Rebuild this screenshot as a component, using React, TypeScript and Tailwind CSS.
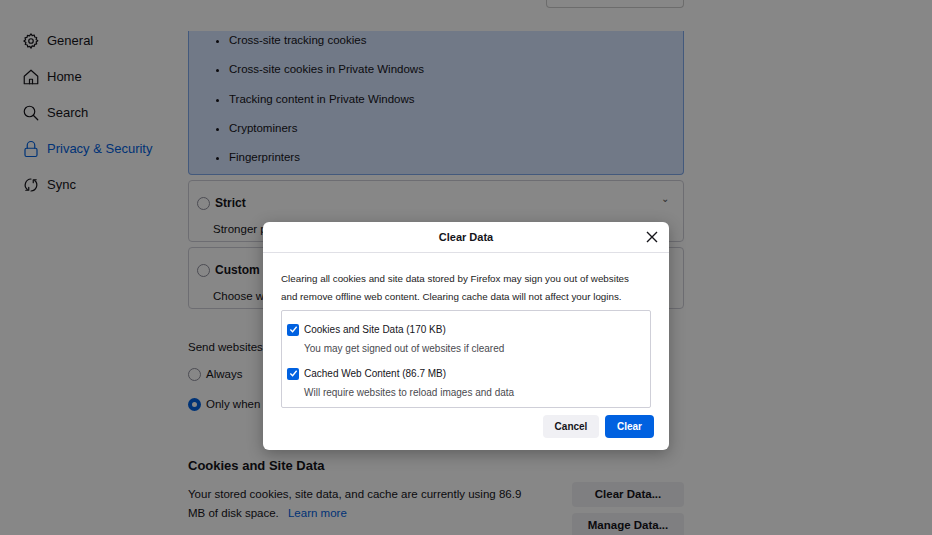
import React from "react";

const F = { fontFamily: "'Liberation Sans', Arial, sans-serif" };

function Nav({ icon, label, active }: { icon: React.ReactNode; label: string; active?: boolean }) {
  return (
    <div className={`flex items-center gap-[7px] h-[36px] ${active ? "text-[#0061e0]" : "text-[#15141a]"}`}>
      <span className="w-[18px] h-[18px] flex items-center justify-center">{icon}</span>
      <span className="text-[13px]">{label}</span>
    </div>
  );
}

const sv = { width: 18, height: 18, viewBox: "0 0 24 24", fill: "none", stroke: "currentColor", strokeWidth: 1.6, strokeLinecap: "round" as const, strokeLinejoin: "round" as const };

export default function App() {
  return (
    <div className="relative w-[932px] h-[535px] overflow-hidden bg-white" style={F}>
      <div className="flex">
        <div className="w-[188px] pl-[22px] pt-[23px] shrink-0">
          <Nav label="General" icon={<svg {...sv}><circle cx="12" cy="12" r="3" /><path d="M12 2.5l1.6 2.3 2.7-.8.6 2.7 2.7.6-.8 2.7 2.3 1.6-2.3 1.6.8 2.7-2.7.6-.6 2.7-2.7-.8L12 21.5l-1.6-2.3-2.7.8-.6-2.7-2.7-.6.8-2.7L2.5 12l2.3-1.6-.8-2.7 2.7-.6.6-2.7 2.7.8z" /></svg>} />
          <Nav label="Home" icon={<svg {...sv}><path d="M3 11l9-8 9 8v10H3z" /><path d="M10 21v-6h4v6" /></svg>} />
          <Nav label="Search" icon={<svg {...sv}><circle cx="10" cy="10" r="7" /><path d="M15 15l6 6" /></svg>} />
          <Nav active label="Privacy & Security" icon={<svg {...sv}><path d="M7 11V7a5 5 0 0110 0v4" /><rect x="4" y="11" width="16" height="11" rx="2" /></svg>} />
          <Nav label="Sync" icon={<svg {...sv}><path d="M12 4a8 8 0 00-5 14M12 20a8 8 0 005-14" /><path d="M9 15v4H5M15 9V5h4" /></svg>} />
        </div>
        <div className="w-[496px] text-[#15141a]">
          <div className="h-[31px] flex justify-end"><div className="w-[138px] h-[8px] border border-t-0 border-[#ccc] rounded-b-[4px]" /></div>
          <div className="h-[144px] bg-[#d6e4ff] border border-t-0 border-[#7fa8ea] rounded-b-[4px] pl-[26px] text-[11.5px]">
            <ul className="list-disc pl-[14px] flex flex-col gap-[12px] pt-[1px]">
              <li>Cross-site tracking cookies</li>
              <li>Cross-site cookies in Private Windows</li>
              <li>Tracking content in Private Windows</li>
              <li>Cryptominers</li>
              <li>Fingerprinters</li>
            </ul>
          </div>
          <div className="mt-[5px] h-[62px] border border-[#cfcfd8] rounded-[4px] px-[8px] pt-[13px] relative">
            <div className="flex items-center gap-[5px]"><span className="w-[13px] h-[13px] rounded-full border border-[#8f8f9d]" /><b className="text-[12px]">Strict</b></div>
            <div className="text-[11.5px] ml-[16px] mt-[9px]">Stronger protection, but may cause some sites or content to break.</div>
            <span className="absolute right-[14px] top-[10px] text-[10px] text-[#555]">⌄</span>
          </div>
          <div className="mt-[5px] h-[62px] border border-[#cfcfd8] rounded-[4px] px-[8px] pt-[13px]">
            <div className="flex items-center gap-[5px]"><span className="w-[13px] h-[13px] rounded-full border border-[#8f8f9d]" /><b className="text-[12px]">Custom</b></div>
            <div className="text-[11.5px] ml-[16px] mt-[9px]">Choose which trackers and scripts to block.</div>
          </div>
          <div className="mt-[30px] text-[11.5px]">Send websites a “Do Not Track” signal</div>
          <div className="mt-[10px] flex items-center gap-[5px] text-[11.5px]"><span className="w-[13px] h-[13px] rounded-full border border-[#8f8f9d]" />Always</div>
          <div className="mt-[12px] flex items-center gap-[5px] text-[11.5px]"><span className="w-[13px] h-[13px] rounded-full border-[4px] border-[#0061e0]" />Only when Firefox is set to block known trackers</div>
          <div className="mt-[43px] text-[13px] font-semibold">Cookies and Site Data</div>
          <div className="flex mt-[7px]">
            <div className="w-[345px] text-[11.5px] leading-[19px] pt-[3px]">Your stored cookies, site data, and cache are currently using 86.9 MB of disk space. <span className="ml-[6px] text-[#0061e0]">Learn more</span></div>
            <div className="ml-auto flex flex-col gap-[6px]">
              {["Clear Data...", "Manage Data...", "Manage Exceptions..."].map(t => (
                <div key={t} className="w-[112px] h-[25px] rounded-[4px] bg-[#f0f0f4] flex items-center justify-center text-[11.5px] font-semibold">{t}</div>
              ))}
            </div>
          </div>
        </div>
      </div>
      <div className="absolute inset-0 bg-black/[0.47]" />
      <div className="absolute left-[263px] top-[222px] w-[406px] h-[228px] bg-white rounded-[6px] shadow-[0_4px_16px_rgba(0,0,0,0.3)] text-[#15141a]">
        <div className="h-[31px] border-b border-[#e0e0e6] flex items-center justify-center relative">
          <span className="text-[11px] font-semibold">Clear Data</span>
          <svg className="absolute right-[11px] top-[9px]" width="12" height="12" viewBox="0 0 12 12" stroke="#15141a" strokeWidth="1.4"><path d="M1 1l10 10M11 1L1 11" /></svg>
        </div>
        <div className="px-[18px] pt-[17px] text-[9.8px] leading-[17.5px] text-[#222] whitespace-nowrap">Clearing all cookies and site data stored by Firefox may sign you out of websites<br />and remove offline web content. Clearing cache data will not affect your logins.</div>
        <div className="mx-[18px] mt-[5px] h-[98px] border border-[#cfcfd8] rounded-[2px] px-[5px] pt-[11px] text-[10px]">
          {[["Cookies and Site Data (170 KB)", "You may get signed out of websites if cleared"], ["Cached Web Content (86.7 MB)", "Will require websites to reload images and data"]].map(([a, b], i) => (
            <div key={a} className={i ? "mt-[10px]" : ""}>
              <div className="flex items-center gap-[5px]">
                <span className="w-[12px] h-[12px] rounded-[2px] bg-[#0061e0] flex items-center justify-center"><svg width="9" height="9" viewBox="0 0 10 10" fill="none" stroke="white" strokeWidth="1.5"><path d="M1.5 5l2.5 2.5L8.5 2" /></svg></span>
                <span>{a}</span>
              </div>
              <div className="ml-[17px] mt-[4px] text-[#4a4a4f]">{b}</div>
            </div>
          ))}
        </div>
        <div className="flex justify-end gap-[6px] mt-[7px] mr-[15px]">
          <div className="w-[56px] h-[23px] rounded-[4px] bg-[#f0f0f4] flex items-center justify-center text-[10px] font-semibold">Cancel</div>
          <div className="w-[49px] h-[23px] rounded-[4px] bg-[#0061e0] text-white flex items-center justify-center text-[10px] font-semibold">Clear</div>
        </div>
      </div>
    </div>
  );
}
